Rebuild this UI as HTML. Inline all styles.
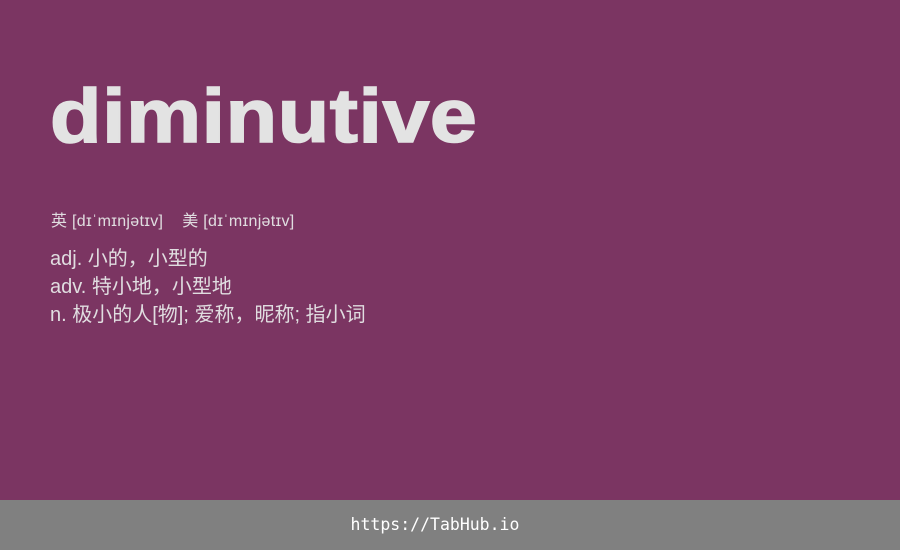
<!DOCTYPE html>
<html><head><meta charset="utf-8"><style>
body{margin:0;width:900px;height:550px;background:#7b3562;position:relative;overflow:hidden;font-family:"Liberation Sans","Noto Sans CJK SC",sans-serif;color:#e0dde0}
h1{position:absolute;left:50px;top:79px;margin:0;font-size:76px;font-weight:bold;line-height:76px;color:#e3e3e3;transform:scaleX(1.11);transform-origin:0 0;-webkit-text-stroke:1.6px #e3e3e3;letter-spacing:0.5px}
.ph{position:absolute;left:51px;top:211px;font-size:16px;line-height:22px;letter-spacing:0.3px}
.def{position:absolute;left:50px;top:245px;font-size:20px;line-height:28px}
.foot{position:absolute;left:0;top:500px;width:900px;height:50px;background:#808080;color:#fff;font-family:"DejaVu Sans Mono","Liberation Mono",monospace;font-size:16.5px;text-align:center;line-height:50px}
.foot span{position:relative;left:-15px}
</style></head><body>
<h1>diminutive</h1>
<div class="ph">英 [dɪˈmɪnjətɪv]&nbsp;&nbsp;&nbsp;&nbsp;美 [dɪˈmɪnjətɪv]</div>
<div class="def">adj. 小的，小型的<br>adv. 特小地，小型地<br>n. 极小的人[物]; 爱称，昵称; 指小词</div>
<div class="foot"><span>https://TabHub.io</span></div>
</body></html>
